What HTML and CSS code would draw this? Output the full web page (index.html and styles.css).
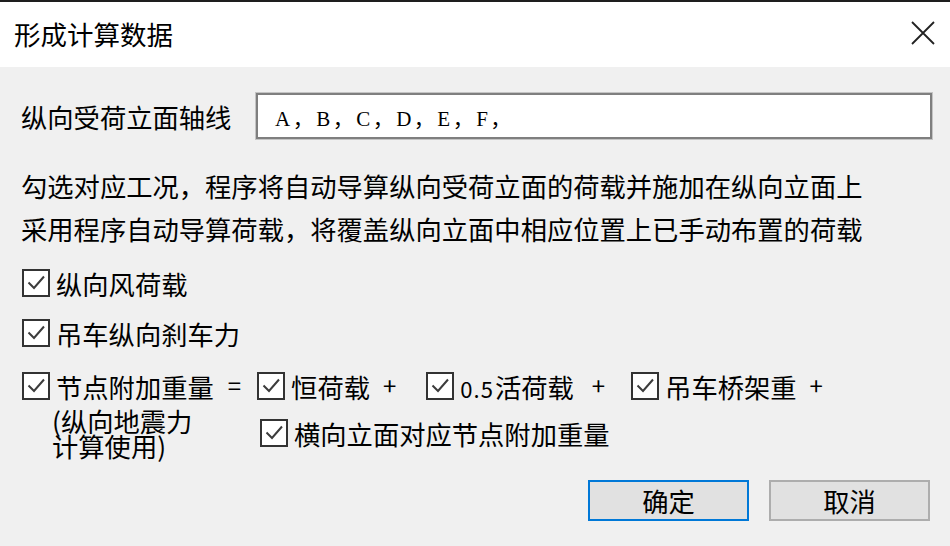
FILE: index.html
```html
<!DOCTYPE html>
<html lang="zh-CN">
<head>
    <meta charset="UTF-8">
    <title>形成计算数据</title>
    <link rel="stylesheet" href="styles.css">
</head>
<body>

    <div class="window">
        <div class="topline"></div>

        <div class="titlebar">
            <span class="title">形成计算数据</span>
            <svg class="close" width="24" height="24" viewBox="0 0 24 24">
                <path d="M1 1 L23 23 M23 1 L1 23" stroke="#222" stroke-width="1.8" fill="none"/>
            </svg>
        </div>

        <div class="content">
            <div class="axis-row">
                <span class="axis-label">纵向受荷立面轴线</span>
                <div class="axis-input">A，B，C，D，E，F，</div>
            </div>

            <p class="hint">
                勾选对应工况，程序将自动导算纵向受荷立面的荷载并施加在纵向立面上<br>
                采用程序自动导算荷载，将覆盖纵向立面中相应位置上已手动布置的荷载
            </p>

            <div class="check-row row-wind">
                <span class="cb"><svg viewBox="0 0 24 24"><path d="M4.5 11.5 L10 17 L20 5.5"/></svg></span>
                <span class="cb-text">纵向风荷载</span>
            </div>

            <div class="check-row row-brake">
                <span class="cb"><svg viewBox="0 0 24 24"><path d="M4.5 11.5 L10 17 L20 5.5"/></svg></span>
                <span class="cb-text">吊车纵向刹车力</span>
            </div>

            <div class="check-row row-mass">
                <span class="cb"><svg viewBox="0 0 24 24"><path d="M4.5 11.5 L10 17 L20 5.5"/></svg></span>
                <span class="cb-text">节点附加重量</span>
                <span class="op op-eq">=</span>
                <span class="cb"><svg viewBox="0 0 24 24"><path d="M4.5 11.5 L10 17 L20 5.5"/></svg></span>
                <span class="cb-text">恒荷载</span>
                <span class="op op-plus">+</span>
                <span class="cb"><svg viewBox="0 0 24 24"><path d="M4.5 11.5 L10 17 L20 5.5"/></svg></span>
                <span class="cb-text"><span class="half">0.5</span>活荷载</span>
                <span class="op op-plus op-wide">+</span>
                <span class="cb"><svg viewBox="0 0 24 24"><path d="M4.5 11.5 L10 17 L20 5.5"/></svg></span>
                <span class="cb-text">吊车桥架重</span>
                <span class="op op-plus">+</span>
            </div>

            <div class="check-row row-cross">
                <div class="note">(纵向地震力<br>计算使用)</div>
                <span class="cb"><svg viewBox="0 0 24 24"><path d="M4.5 11.5 L10 17 L20 5.5"/></svg></span>
                <span class="cb-text">横向立面对应节点附加重量</span>
            </div>

            <div class="buttons">
                <button class="btn btn-default">确定</button>
                <button class="btn">取消</button>
            </div>
        </div>
    </div>

</body>
</html>
```

FILE: styles.css
```css
/* Global styles */
body {
    margin: 0;
    padding: 0;
    font-family: "Noto Sans CJK SC", sans-serif;
    font-size: 26.3px;
    color: #000;
    background-color: #f0f0f0;
}

.window {
    width: 950px;
    height: 546px;
    overflow: hidden;
    background-color: #f0f0f0;
}

.topline {
    height: 2px;
    background-color: #1e1e1e;
}

/* Title bar */
.titlebar {
    height: 65px;
    background-color: #fff;
    display: flex;
    align-items: center;
    justify-content: space-between;
    padding: 0 15px 0 14px;
}

.title {
    font-size: 26.5px;
    margin-top: -2px;
}

.close {
    display: block;
    margin-top: -3px;
}

/* Dialog body */
.content {
    padding: 0 18px 0 21px;
}

.axis-row {
    display: flex;
    align-items: center;
    margin-top: 26px;
}

.axis-label {
    flex: 0 0 235px;
}

.axis-input {
    flex: 1;
    height: 46px;
    box-sizing: border-box;
    border: 2px solid #7f7f7f;
    box-shadow: 0 0 0 1px #c4c4c4;
    background-color: #fff;
    padding: 5px 0 0 17px;
    font-family: "Liberation Serif", "Noto Sans CJK SC", serif;
    font-size: 21px;
    letter-spacing: 2.5px;
    line-height: 38px;
}

.hint {
    margin: 25px 0 0 0;
    line-height: 43px;
}

/* Checkbox rows */
.check-row {
    display: flex;
    align-items: center;
    height: 40px;
}

.row-wind {
    margin-top: 13px;
}

.row-brake {
    margin-top: 10px;
}

.row-mass {
    margin-top: 13px;
}

.row-cross {
    height: 48px;
    margin-top: 3px;
}

.cb {
    flex: 0 0 auto;
    width: 28px;
    height: 28px;
    box-sizing: border-box;
    border: 2px solid #333;
    background-color: #fff;
    margin: 0 6px 0 1px;
}

.cb svg {
    display: block;
    width: 24px;
    height: 24px;
    fill: none;
    stroke: #3c3c3c;
    stroke-width: 2;
}

.half {
    font-family: "Noto Sans CJK SC", sans-serif;
    font-size: 22px;
    letter-spacing: 1px;
    margin-right: 1px;
}

.op {
    display: inline-block;
    font-size: 24px;
    margin-top: -4px;
}

.op-eq {
    margin: -4px 15px 0 14px;
}

.op-plus {
    margin: -4px 29px 0 13px;
}

.op-wide {
    margin-left: 18px;
    margin-right: 25px;
}

.note {
    flex: 0 0 207px;
    margin-left: 31px;
    line-height: 25px;
}

/* Buttons */
.buttons {
    display: flex;
    justify-content: flex-end;
    gap: 20px;
    margin: 23px 2px 0 0;
}

.btn {
    width: 161px;
    height: 41px;
    box-sizing: border-box;
    border: 2px solid #adadad;
    background-color: #e1e1e1;
    font-family: "Noto Sans CJK SC", sans-serif;
    font-size: 26.3px;
    color: #000;
    padding: 0;
    line-height: 35px;
}

.btn-default {
    border-color: #0078d7;
}
```
